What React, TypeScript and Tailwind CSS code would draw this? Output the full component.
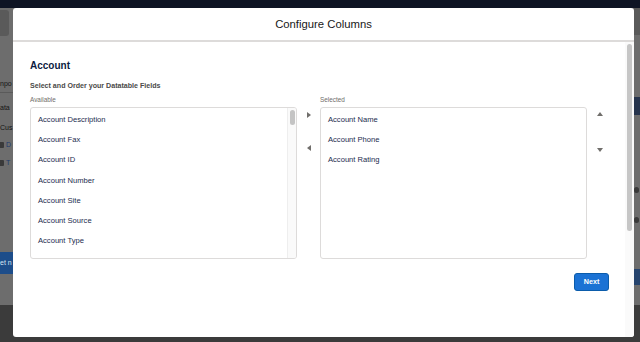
import React from "react";

const available = [
  "Account Description",
  "Account Fax",
  "Account ID",
  "Account Number",
  "Account Site",
  "Account Source",
  "Account Type",
  "Annual Revenue",
];

const selected = ["Account Name", "Account Phone", "Account Rating"];

function Arrow({ dir }: { dir: "left" | "right" | "up" | "down" }) {
  const pts = {
    right: "2,1 6,4 2,7",
    left: "6,1 2,4 6,7",
    up: "1,6 4,2 7,6",
    down: "1,2 4,6 7,2",
  }[dir];
  return (
    <svg width="8" height="8" viewBox="0 0 8 8" className="block">
      <polygon points={pts} fill="#706e6b" />
    </svg>
  );
}

function ListBox({ items, scroll }: { items: string[]; scroll?: boolean }) {
  return (
    <div className="relative h-[152px] w-[267px] overflow-hidden rounded-[3px] border border-[#dddbda] bg-white">
      <ul className="pt-[1px]">
        {items.map((it) => (
          <li key={it} className="flex h-[20.3px] items-center pl-[7px] text-[7.6px] text-[#1b2b4d]">
            {it}
          </li>
        ))}
      </ul>
      {scroll && (
        <div className="absolute right-0 top-0 flex h-full w-[9px] justify-center border-l border-[#eeeeee] bg-[#fafafa] pt-[2px]">
          <div className="h-[15px] w-[5px] rounded-full bg-[#c4c4c4]" />
        </div>
      )}
    </div>
  );
}

export default function App() {
  return (
    <div className="relative h-[342px] w-[640px] overflow-hidden bg-[#6d6d6d] font-['Liberation_Sans',Arial,sans-serif]">
      {/* backdrop page */}
      <div className="h-[8px] bg-[#0e1424]" />
      <div className="flex h-[297px]">
        <div className="flex w-[13px] flex-col overflow-hidden text-[7px] text-[#141414]">
          <div className="mt-[2px] h-[26px] w-[9px] rounded-r-[3px] bg-[#5a5a5a]" />
          <div className="mt-[43px] h-[14px] whitespace-nowrap border-b border-[#5a5a5a]">npo</div>
          <div className="mt-[10px] whitespace-nowrap">ata</div>
          <div className="mt-[9px] whitespace-nowrap">Cus</div>
          <div className="mt-[7px] flex items-center gap-[2px]">
            <span className="h-[6px] w-[4px] rounded-r-[1px] bg-[#3a3a3a]" />
            <span className="text-[#1f3a6b]">D</span>
          </div>
          <div className="mt-[7px] flex items-center gap-[2px]">
            <span className="h-[6px] w-[4px] rounded-r-[1px] bg-[#3a3a3a]" />
            <span className="text-[#1f3a6b]">T</span>
          </div>
          <div className="mt-[84px] flex h-[22px] items-center whitespace-nowrap bg-[#1d4d8a] text-[#d9e4f2]">et n</div>
        </div>
        <div className="flex-1" />
        <div className="flex w-[6px] flex-col overflow-hidden">
          <div className="h-[27px] bg-[#5a5a5a]" />
          <div className="mt-[62px] h-[18px] bg-[#26344d]" />
          <div className="mt-[72px] h-[6px] w-[5px] rounded-full bg-[#3a3a3a]" />
          <div className="mt-[24px] h-[6px] w-[5px] rounded-full bg-[#3a3a3a]" />
          <div className="mt-[46px] h-[16px] bg-[#26446e]" />
        </div>
      </div>
      <div className="h-[37px] bg-[#3b3b3b]" />

      {/* modal */}
      <div className="absolute left-[13px] top-[8px] flex h-[329px] w-[621px] flex-col overflow-hidden rounded-[3px] bg-white">
        <div className="flex h-[34px] shrink-0 items-center justify-center border-b-2 border-[#dddbda] text-[11.3px] text-[#181818]">
          Configure Columns
        </div>
        <div className="relative flex-1">
          <div className="pl-[17px] pt-[16px]">
            <h2 className="text-[10px] font-bold text-[#0c1b3f]">Account</h2>
            <div className="mt-[8px] text-[7.1px] font-bold text-[#4a4a48]">Select and Order your Datatable Fields</div>
            <div className="mt-[3px] flex">
              <div>
                <div className="mb-[3px] text-[6.4px] text-[#706e6b]">Available</div>
                <ListBox items={available} scroll />
              </div>
              <div className="flex w-[23px] flex-col items-center pt-[16px]">
                <Arrow dir="right" />
                <div className="mt-[25px]">
                  <Arrow dir="left" />
                </div>
              </div>
              <div>
                <div className="mb-[3px] text-[6.4px] text-[#706e6b]">Selected</div>
                <ListBox items={selected} />
              </div>
              <div className="flex w-[25px] flex-col items-center pt-[15px]">
                <Arrow dir="up" />
                <div className="mt-[28px]">
                  <Arrow dir="down" />
                </div>
              </div>
            </div>
            <div className="mt-[14px] flex justify-end pr-[25px]">
              <button className="h-[18px] w-[35px] rounded-[3px] border border-[#0b5cab] bg-[#1b72d4] text-[7.2px] font-bold text-white">
                Next
              </button>
            </div>
          </div>
          <div className="absolute right-0 top-0 flex h-full w-[9px] justify-center bg-[#fafafa] pt-[2px]">
            <div className="h-[187px] w-[5px] rounded-full bg-[#c6c6c6]" />
          </div>
        </div>
      </div>
    </div>
  );
}
